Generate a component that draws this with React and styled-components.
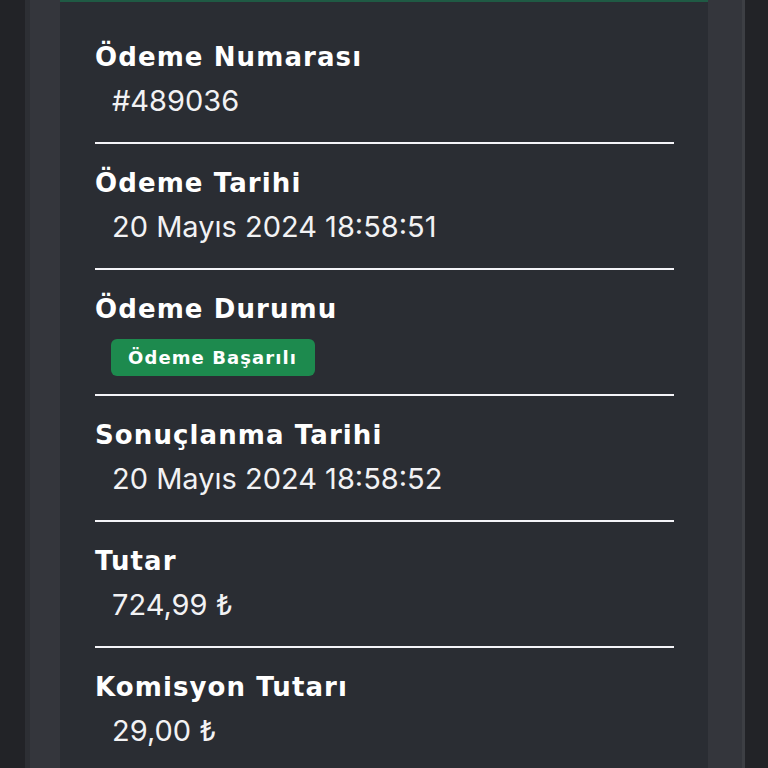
import styled, { createGlobalStyle } from "styled-components";

const GlobalStyle = createGlobalStyle`
    html, body {
        margin: 0;
        padding: 0;
        background-color: #222327;
        height: 100%;
        overflow: hidden;
    }
`

const Page = styled.div`
    display: flex;
    justify-content: flex-start;
    padding-left: 25px;
    height: 768px;
    box-sizing: border-box;
`

const Panel = styled.div`
    display: flex;
    width: 720px;
    height: 100%;
    background-color: #34363c;
    border-left: 5px solid #2d2f34;
    border-right: 3px solid #3d3f44;
    padding-left: 30px;
    padding-right: 34px;
    box-sizing: border-box;
`

const Card = styled.div`
    flex: 1;
    background-color: #2a2d33;
    border-top: 2px solid #1f5a44;
    padding: 16px 34px 0 35px;
    box-sizing: border-box;
`

const Row = styled.div`
    display: flex;
    flex-direction: column;
    align-items: flex-start;
    height: 126px;
    box-sizing: border-box;
    padding-top: 21px;
    border-bottom: ${props => props.$last ? "none" : "2px solid #f4f4f8"};
`

const Title = styled.div`
    font-family: "DejaVu Sans", "Noto Sans", sans-serif;
    font-weight: 700;
    font-size: 26px;
    letter-spacing: 1.1px;
    color: #ffffff;
    line-height: 36px;
`

const Value = styled.div`
    font-family: "Inter", "Roboto", sans-serif;
    font-size: 29px;
    color: #f2f2f4;
    line-height: 40px;
    margin-top: 6px;
    padding-left: 17px;
`

const Badge = styled.span`
    margin-top: 12px;
    margin-left: 16px;
    background-color: #1d8a4e;
    color: #ffffff;
    font-family: "DejaVu Sans", "Noto Sans", sans-serif;
    font-weight: 700;
    font-size: 18px;
    letter-spacing: 1.1px;
    line-height: 37px;
    padding: 0 18px 0 17px;
    border-radius: 6px;
`

const rows = [
    { title: "Ödeme Numarası", value: "#489036" },
    { title: "Ödeme Tarihi", value: "20 Mayıs 2024 18:58:51" },
    { title: "Ödeme Durumu", badge: "Ödeme Başarılı" },
    { title: "Sonuçlanma Tarihi", value: "20 Mayıs 2024 18:58:52" },
    { title: "Tutar", value: "724,99 ₺" },
    { title: "Komisyon Tutarı", value: "29,00 ₺" },
]

const App = () => {
    return (
        <>
            <GlobalStyle />
            <Page>
                <Panel>
                    <Card>
                        {rows.map((row, i) => (
                            <Row key={row.title} $last={i === rows.length - 1}>
                                <Title>{row.title}</Title>
                                {row.badge
                                    ? <Badge>{row.badge}</Badge>
                                    : <Value>{row.value}</Value>}
                            </Row>
                        ))}
                    </Card>
                </Panel>
            </Page>
        </>
    )
}

export default App;
